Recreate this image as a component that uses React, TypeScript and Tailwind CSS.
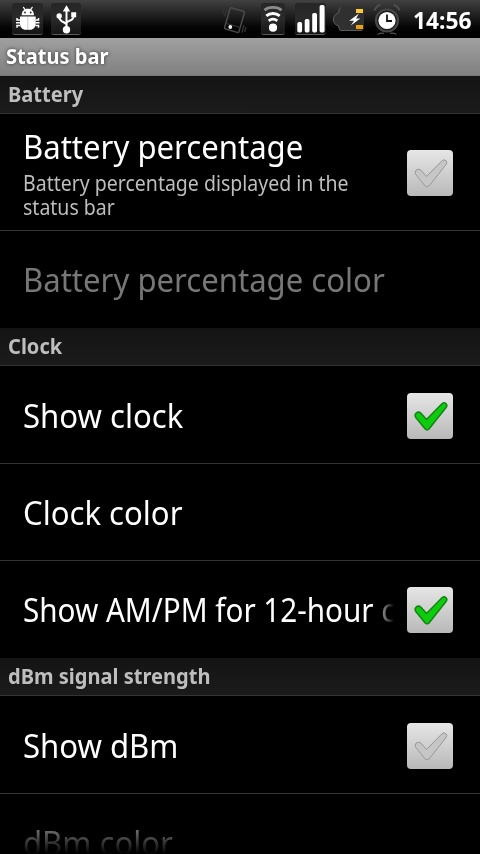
import type { ReactNode } from "react";

interface PreferenceProps {
  title: string;
  summary?: string;
  checked?: boolean;
  disabled?: boolean;
  className?: string;
  titleClass?: string;
  textClass?: string;
}

function BugIcon() {
  return (
    <svg width="31" height="34" viewBox="0 0 31 34" fill="#fff">
      <path d="M9.700 13.300C9.700 9 12 6.800 15.800 6.800s6.100 2.200 6.100 6.500z" />
      <path d="M11.500 5.300l2 3M20.200 5.300l-2 3" stroke="#fff" strokeWidth="1.200" strokeLinecap="round" />
      <path d="M8 14.500h15.700v7.200c0 3.500-2.500 6-5.500 6h-4.700c-3 0-5.500-2.500-5.500-6z" />
      <path d="M8 18H5v-2M8 20.700H4M8 23.500H5v2.200M23.500 18h3v-2M23.500 20.700h4M23.500 23.500h3v2.200" stroke="#fff" strokeWidth="1.500" fill="none" />
      <path d="M15.800 15v12.500" stroke="#bbb" strokeWidth="0.800" />
      <circle cx="13" cy="10.500" r="0.900" fill="#222" />
      <circle cx="18.700" cy="10.500" r="0.900" fill="#222" />
    </svg>
  );
}

function UsbIcon() {
  return (
    <svg width="30" height="34" viewBox="0 0 30 34" fill="#fff">
      <path d="M15.500 3.200l3.700 6.300h-7.400z" />
      <path d="M15.500 8v20M15.500 22.500c-1-2.800-7.300-2-7.300-8M15.500 21c1-2.800 7.500-1.500 7.500-8" stroke="#fff" strokeWidth="2" fill="none" />
      <circle cx="8.200" cy="14" r="2.700" />
      <path d="M20.200 10.200h5v5h-5z" />
      <circle cx="15.500" cy="27.700" r="3.700" />
    </svg>
  );
}

function VibrateIcon() {
  return (
    <svg width="32" height="34" viewBox="0 0 32 34" fill="none" stroke="#4a4a4a">
      <g transform="rotate(16 16 17)">
        <rect x="9" y="6" width="15" height="22" rx="1.500" strokeWidth="1.500" />
        <path d="M9.500 22.500h14" stroke="#3a3a3a" />
        <path d="M6 8v8M3.500 9v5M27 19v8M29.500 20.500v5" stroke="#343434" strokeWidth="1.400" />
      </g>
      <circle cx="12.300" cy="24" r="1.900" fill="#eee" stroke="none" />
    </svg>
  );
}

function WifiIcon() {
  return (
    <svg width="24" height="34" viewBox="0 0 24 34" fill="none" stroke="#fff" strokeLinecap="butt">
      <path d="M3.500 8.300C7.500 4.500 16.500 4.500 20.500 8.300" stroke="#8c8c8c" strokeWidth="2.800" />
      <path d="M5.300 13.800c3.700-3 9.700-3 13.400 0" strokeWidth="3" />
      <path d="M7.700 18.800c2.700-2.100 5.900-2.100 8.600 0" strokeWidth="2.800" />
      <circle cx="12" cy="25.700" r="4.100" fill="#fff" stroke="none" />
    </svg>
  );
}

function SignalIcon() {
  return (
    <svg width="31" height="34" viewBox="0 0 31 34" fill="#fff">
      <rect x="2.300" y="20" width="4.800" height="10.500" rx="1.700" />
      <rect x="9.700" y="17" width="4.800" height="13.500" rx="1.700" />
      <rect x="17.200" y="11" width="4.800" height="19.500" rx="1.700" />
      <rect x="24.600" y="3" width="5" height="27.500" rx="1.700" />
    </svg>
  );
}

function BatteryIcon() {
  return (
    <svg width="34" height="34" viewBox="0 0 34 34">
      <path d="M9 5.500h21q2 0 2 2v19q0 2-2 2H9q-2 0-2.500-4.500l-3-1.500-2-3v-4l2-3 3-1.500Q7 5.500 9 5.500z" fill="#303030" />
      <path d="M30 28.500H9q-2 0-2.500-4.500l-3-1.500-2-3v-4l2-3 3-1.500Q7 5.500 9 5.500" fill="none" stroke="#5c5c5c" />
      <rect x="24" y="7" width="7" height="4" fill="#ffcb2b" />
      <rect x="24" y="23" width="7" height="4" fill="#eda00b" />
      <path d="M27 11.500l-9.800 7.300h4.800l-3.200 4.700 9.500-7h-4.300z" fill="#fff" />
    </svg>
  );
}

function AlarmIcon() {
  return (
    <svg width="30" height="34" viewBox="0 0 30 34" fill="none">
      <circle cx="15" cy="18.500" r="11" fill="#1c1c1c" stroke="#484848" strokeWidth="2.200" />
      <circle cx="15" cy="18.500" r="8.600" fill="#fff" />
      <path d="M15 12.500v6.500h5" stroke="#151515" strokeWidth="1.800" />
      <path d="M2.500 8.500Q4 4 8.500 3M27.500 8.500Q26 4 21.500 3" stroke="#4e4e4e" strokeWidth="2.200" />
      <path d="M5.500 32.500l2.500-1.300h4M24.500 32.500l-2.500-1.300h-4" stroke="#666" />
    </svg>
  );
}

// Dark plate that sits behind most of the notification icons
function Plate({ children }: { children: ReactNode }) {
  return (
    <div className="h-[32px] overflow-hidden rounded-[3px] border-b border-[#5c5c5c] bg-gradient-to-b from-[#262626] via-[#2a2a2a] to-[#151515]">
      <div className="-mt-px">{children}</div>
    </div>
  );
}

function StatusBar() {
  return (
    <div className="flex h-[38px] shrink-0 bg-gradient-to-b from-[#414141] via-[#181818] to-black pt-[3px]">
      <div className="flex gap-[8px] pl-[12px]">
        <Plate><BugIcon /></Plate>
        <Plate><UsbIcon /></Plate>
      </div>
      <div className="ml-auto flex pr-[8px]">
        <div className="mr-[11px]"><VibrateIcon /></div>
        <div className="mr-[10px]"><Plate><WifiIcon /></Plate></div>
        <div className="mr-[6px]"><Plate><SignalIcon /></Plate></div>
        <div className="mr-[6px] -mt-px"><BatteryIcon /></div>
        <div className="-mt-px"><AlarmIcon /></div>
        <span className="ml-[11px] block w-[59px] origin-left scale-x-[0.95] text-[24px] leading-[33px] font-bold whitespace-nowrap text-white">
          14:56
        </span>
      </div>
    </div>
  );
}

function CategoryHeader({ title }: { title: string }) {
  return (
    <div className="h-[38px] shrink-0 border-b border-[#343434] bg-gradient-to-b from-[#141414] to-[#1b1b1b] pl-[8px]">
      <h2 className="origin-left scale-x-[0.955] text-[21px] leading-[37px] font-bold text-[#bebebe]">{title}</h2>
    </div>
  );
}

function CheckBox({ checked }: { checked: boolean }) {
  return (
    <div className="h-[46px] w-[46px] shrink-0 rounded-[4px] bg-gradient-to-b from-[#e6e6e6] to-[#b9b9b9]">
      <svg width="46" height="46" viewBox="0 0 46 46" strokeLinejoin="round">
        <path
          d="M9 20.200q2.500-2.200 5 0l5.500 6.300L35.200 10.500q2-1.500 3.900.3 1.500 1.700 0 3.700L22 36q-2 1.800-3.800 0L8.800 24.500q-1.500-2.200.2-4.300z"
          fill={checked ? "#0dcb0d" : "#c6c6c6"}
          stroke={checked ? "#158415" : "#989898"}
          strokeWidth={checked ? 1.5 : 1}
        />
      </svg>
    </div>
  );
}

function Preference({
  title,
  summary,
  checked,
  disabled,
  className = "h-[97px]",
  titleClass = "",
  textClass = "scale-x-[0.942]",
}: PreferenceProps) {
  return (
    <div className={`flex shrink-0 items-center border-[#343434] pr-[27px] pl-[23px] ${className}`}>
      <div className="min-w-0 flex-1 whitespace-nowrap">
        <p className={`text-[33px] leading-[40px] ${disabled ? "text-[#777]" : "text-white"} ${titleClass}`}>
          <span className={`inline-block origin-left ${textClass}`}>{title}</span>
        </p>
        {summary && (
          <p className="mt-[4px] origin-left scale-x-[0.929] text-[21px] leading-[24px] whitespace-pre text-[#bebebe]">
            {summary}
          </p>
        )}
      </div>
      {checked !== undefined && <CheckBox checked={checked} />}
    </div>
  );
}

export default function App() {
  return (
    <div className="relative flex h-[854px] w-[480px] flex-col overflow-hidden bg-black font-['Noto_Sans',sans-serif]">
      <StatusBar />
      <div className="h-[38px] shrink-0 border-b border-[#777] bg-gradient-to-b from-[#a0a0a0] to-[#808080] pl-[6px]">
        <h1 className="origin-left scale-x-[0.955] text-[21px] leading-[37px] font-bold text-white [text-shadow:0_0_4px_#333]">
          Status bar
        </h1>
      </div>
      <CategoryHeader title="Battery" />
      <Preference
        title="Battery percentage"
        summary={"Battery percentage displayed in the\nstatus bar"}
        checked={false}
        className="h-[117px] border-b pt-[2px]"
      />
      <Preference title="Battery percentage color" disabled />
      <CategoryHeader title="Clock" />
      <Preference title="Show clock" checked className="h-[98px] border-b pt-[2px]" />
      <Preference title="Clock color" className="h-[97px] border-b pt-[2px]" />
      <Preference
        title="Show AM/PM for 12-hour clock"
        checked
        titleClass="overflow-hidden [mask-image:linear-gradient(to_right,black_350px,transparent_371px)]"
        textClass="scale-x-[0.898]"
      />
      <CategoryHeader title="dBm signal strength" />
      <Preference title="Show dBm" checked={false} className="h-[98px] border-b pt-[2px]" />
      <Preference title="dBm color" disabled />
      <div className="absolute inset-x-0 bottom-0 h-[26px] bg-gradient-to-b from-transparent to-black" />
    </div>
  );
}
